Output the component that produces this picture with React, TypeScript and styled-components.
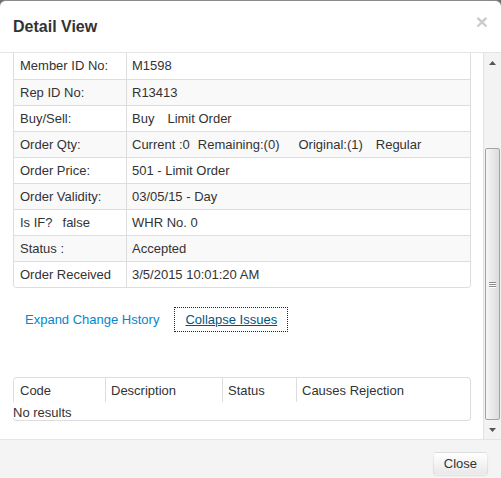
import React from 'react';
import styled, { createGlobalStyle } from 'styled-components';

const GlobalStyle = createGlobalStyle`
  html, body { margin: 0; padding: 0; background: #6f6f6f; overflow: hidden; }
  body { font-family: "Liberation Sans", Arial, sans-serif; }
  * { box-sizing: border-box; }
`;

const Modal = styled.div`
  width: 501px;
  height: 478px;
  display: flex;
  flex-direction: column;
  background: #fff;
  border-top: 1px solid #8a8a8a;
  border-radius: 6px 6px 0 0;
  overflow: hidden;
  font-family: "Liberation Sans", Arial, sans-serif;
  font-size: 13px;
  color: #333;
`;

const Header = styled.div`
  flex: none;
  height: 52px;
  display: flex;
  align-items: center;
  justify-content: space-between;
  padding: 1px 13px 0;
  border-bottom: 1px solid #e5e5e5;
`;

const Title = styled.h4`
  margin: 0;
  font-size: 16px;
  font-weight: bold;
  line-height: 18px;
  color: #333;
`;

const CloseX = styled.button`
  align-self: flex-start;
  margin-top: 10px;
  padding: 0;
  border: 0;
  background: none;
  font-family: "Liberation Sans", Arial, sans-serif;
  font-size: 21px;
  font-weight: bold;
  line-height: 20px;
  color: #000;
  opacity: 0.2;
  cursor: pointer;
`;

const Body = styled.div`
  flex: none;
  height: 386px;
  display: flex;
`;

const Content = styled.div`
  flex: 1;
  min-width: 0;
  padding: 0 12px 0 13px;
  overflow: hidden;
`;

const DetailTable = styled.div`
  border: 1px solid #dddddd;
  border-top: none;
  border-radius: 0 0 4px 4px;
  overflow: hidden;
`;

const DetailRow = styled.div<{ $striped: boolean; $first: boolean }>`
  display: grid;
  grid-template-columns: 112px 1fr;
  height: 26px;
  border-top: ${(p) => (p.$first ? 'none' : '1px solid #dddddd')};
  background: ${(p) => (p.$striped ? '#f9f9f9' : '#ffffff')};
`;

const LabelCell = styled.div`
  display: flex;
  align-items: center;
  padding: 0 6px;
  line-height: 16px;
  white-space: nowrap;
`;

const ValueCell = styled.div`
  display: flex;
  align-items: center;
  padding: 0 5px;
  border-left: 1px solid #dddddd;
  line-height: 16px;
  white-space: nowrap;
`;

const Part = styled.span<{ $gap?: number }>`
  margin-left: ${(p) => p.$gap ?? 0}px;
`;

const LinkRow = styled.div`
  display: flex;
  gap: 4px;
  margin-top: 19px;
  padding-left: 1px;
`;

const LinkButton = styled.button<{ $focused?: boolean }>`
  padding: 4px 10px;
  border: 1px solid transparent;
  background: none;
  font-family: "Liberation Sans", Arial, sans-serif;
  font-size: 13px;
  line-height: 15px;
  color: ${(p) => (p.$focused ? '#005580' : '#0088cc')};
  text-decoration: ${(p) => (p.$focused ? 'underline' : 'none')};
  border-color: ${(p) => (p.$focused ? '#222' : 'transparent')};
  border-style: ${(p) => (p.$focused ? 'dotted' : 'solid')};
  cursor: pointer;
`;

const IssuesTable = styled.div`
  margin-top: 45px;
  border: 1px solid #dddddd;
  border-left: none;
  border-radius: 4px;
`;

const IssuesHead = styled.div`
  display: grid;
  grid-template-columns: 91px 117px 74px 1fr;
  height: 24px;
  border-left: 1px solid #dddddd;
  border-top-left-radius: 4px;
`;

const HeadCell = styled.div<{ $divider?: boolean }>`
  display: flex;
  align-items: center;
  padding: 0 5px;
  border-left: ${(p) => (p.$divider ? '1px solid #dddddd' : 'none')};
  white-space: nowrap;
`;

const NoResults = styled.div`
  height: 18px;
  line-height: 18px;
  padding-top: 2px;
`;

const Scrollbar = styled.div`
  flex: none;
  width: 18px;
  display: flex;
  flex-direction: column;
  border-left: 1px solid #e2e2e2;
  background: #f3f3f3;
`;

const ArrowBox = styled.div`
  flex: none;
  height: 19px;
  display: flex;
  align-items: center;
  justify-content: center;
`;

const Track = styled.div`
  flex: 1;
  display: flex;
  flex-direction: column;
  padding: 76px 1px 0 1px;
`;

const Thumb = styled.div`
  flex: 1;
  display: flex;
  align-items: center;
  justify-content: center;
  border: 1px solid #a3a3a3;
  border-radius: 2px;
  background: linear-gradient(to right, #f6f6f6, #dcdcdc);
`;

const Grip = styled.div`
  display: flex;
  flex-direction: column;
  gap: 1px;
`;

const GripLine = styled.div`
  width: 7px;
  height: 1px;
  background: #8c8c8c;
  box-shadow: 0 1px 0 #ffffff;
`;

const Footer = styled.div`
  flex: 1;
  display: flex;
  justify-content: flex-end;
  align-items: flex-start;
  padding: 12px 13px 0;
  border-top: 1px solid #e5e5e5;
  background: #f4f4f4;
`;

const CloseButton = styled.button`
  height: 23px;
  padding: 0 10px;
  border: 1px solid rgba(0, 0, 0, 0.06);
  border-radius: 4px;
  background: linear-gradient(to bottom, #ffffff, #e9e9e9);
  box-shadow: 0 1px 1px rgba(0, 0, 0, 0.08);
  font-family: "Liberation Sans", Arial, sans-serif;
  font-size: 13px;
  color: #333;
  cursor: pointer;
`;

const rows: { label: React.ReactNode; value: React.ReactNode }[] = [
  { label: 'Member ID No:', value: 'M1598' },
  { label: 'Rep ID No:', value: 'R13413' },
  {
    label: 'Buy/Sell:',
    value: (
      <>
        <Part>Buy</Part>
        <Part $gap={13}>Limit Order</Part>
      </>
    ),
  },
  {
    label: 'Order Qty:',
    value: (
      <>
        <Part>Current :0</Part>
        <Part $gap={8}>Remaining:(0)</Part>
        <Part $gap={19}>Original:(1)</Part>
        <Part $gap={13}>Regular</Part>
      </>
    ),
  },
  { label: 'Order Price:', value: '501 - Limit Order' },
  { label: 'Order Validity:', value: '03/05/15 - Day' },
  {
    label: (
      <>
        <Part>Is IF?</Part>
        <Part $gap={10}>false</Part>
      </>
    ),
    value: 'WHR No. 0',
  },
  { label: 'Status :', value: 'Accepted' },
  { label: 'Order Received', value: '3/5/2015 10:01:20 AM' },
];

export default function App() {
  return (
    <>
      <GlobalStyle />
      <Modal>
        <Header>
          <Title>Detail View</Title>
          <CloseX aria-label="Close">×</CloseX>
        </Header>
        <Body>
          <Content>
            <DetailTable>
              {rows.map((r, i) => (
                <DetailRow key={i} $first={i === 0} $striped={i % 2 === 1}>
                  <LabelCell>{r.label}</LabelCell>
                  <ValueCell>{r.value}</ValueCell>
                </DetailRow>
              ))}
            </DetailTable>
            <LinkRow>
              <LinkButton>Expand Change Hstory</LinkButton>
              <LinkButton $focused>Collapse Issues</LinkButton>
            </LinkRow>
            <IssuesTable>
              <IssuesHead>
                <HeadCell style={{ paddingLeft: 6 }}>Code</HeadCell>
                <HeadCell $divider>Description</HeadCell>
                <HeadCell $divider>Status</HeadCell>
                <HeadCell $divider>Causes Rejection</HeadCell>
              </IssuesHead>
              <NoResults>No results</NoResults>
            </IssuesTable>
          </Content>
          <Scrollbar>
            <ArrowBox>
              <svg width="7" height="4" viewBox="0 0 7 4">
                <polygon points="0,4 7,4 3.5,0" fill="#555" />
              </svg>
            </ArrowBox>
            <Track>
              <Thumb>
                <Grip>
                  <GripLine />
                  <GripLine />
                  <GripLine />
                </Grip>
              </Thumb>
            </Track>
            <ArrowBox>
              <svg width="7" height="4" viewBox="0 0 7 4">
                <polygon points="0,0 7,0 3.5,4" fill="#555" />
              </svg>
            </ArrowBox>
          </Scrollbar>
        </Body>
        <Footer>
          <CloseButton>Close</CloseButton>
        </Footer>
      </Modal>
    </>
  );
}
